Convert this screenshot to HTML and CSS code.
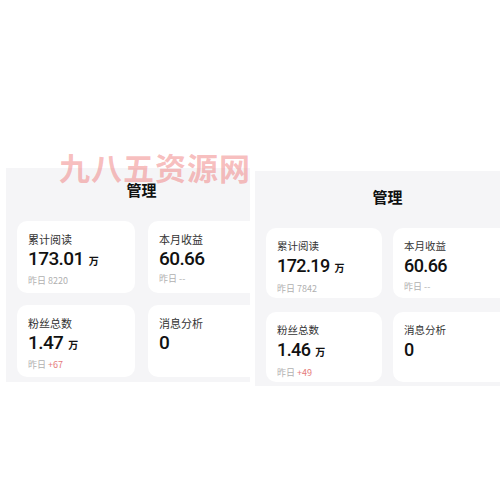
FILE: index.html
```html
<!DOCTYPE html>
<html lang="zh">
<head>
<meta charset="utf-8">
<link rel="stylesheet" href="styles.css">
</head>
<body>
<div class="canvas">
  <div class="shot shot-left">
    <div class="title">管理</div>
    <div class="grid">
      <div class="card">
        <div class="label">累计阅读</div>
        <div class="value">173.01<span class="unit">万</span></div>
        <div class="sub">昨日 8220</div>
      </div>
      <div class="card">
        <div class="label">本月收益</div>
        <div class="value">60.66</div>
        <div class="sub">昨日 --</div>
      </div>
      <div class="card">
        <div class="label">粉丝总数</div>
        <div class="value">1.47<span class="unit">万</span></div>
        <div class="sub">昨日 <span class="up">+67</span></div>
      </div>
      <div class="card">
        <div class="label">消息分析</div>
        <div class="value">0</div>
      </div>
    </div>
  </div>
  <div class="shot shot-right">
    <div class="title">管理</div>
    <div class="grid">
      <div class="card">
        <div class="label">累计阅读</div>
        <div class="value">172.19<span class="unit">万</span></div>
        <div class="sub">昨日 7842</div>
      </div>
      <div class="card">
        <div class="label">本月收益</div>
        <div class="value">60.66</div>
        <div class="sub">昨日 --</div>
      </div>
      <div class="card">
        <div class="label">粉丝总数</div>
        <div class="value">1.46<span class="unit">万</span></div>
        <div class="sub">昨日 <span class="up">+49</span></div>
      </div>
      <div class="card">
        <div class="label">消息分析</div>
        <div class="value">0</div>
      </div>
    </div>
  </div>
  <div class="watermark">九八五资源网</div>
</div>
</body>
</html>
```

FILE: styles.css
```css
html, body {
  margin: 0;
  padding: 0;
  background: #ffffff;
}
body {
  width: 500px;
  height: 500px;
  overflow: hidden;
  font-family: "Noto Sans CJK SC", "Noto Sans", sans-serif;
}
.canvas {
  position: relative;
  display: flex;
  align-items: flex-start;
  gap: 5px;
  padding: 168px 0 0 6px;
}
.shot {
  flex: none;
  overflow: hidden;
  background: #f5f5f7;
  box-sizing: border-box;
}
.shot-left {
  width: 244px;
  height: 214px;
  padding: 12px 0 0 11px;
}
.shot-right {
  width: 245px;
  height: 215px;
  margin-top: 3px;
  padding: 16px 0 0 11px;
}
.title {
  font-size: 15px;
  line-height: 20px;
  font-weight: 700;
  color: #111;
  text-align: center;
}
.shot-left .title { width: 249px; }
.shot-right .title { width: 243px; }
.grid {
  display: grid;
}
.shot-left .grid {
  margin-top: 21px;
  grid-template-columns: 118px 118px;
  grid-auto-rows: 72px;
  column-gap: 13px;
  row-gap: 12px;
}
.shot-right .grid {
  margin-top: 21px;
  grid-template-columns: 116px 116px;
  grid-auto-rows: 70px;
  column-gap: 11px;
  row-gap: 14px;
}
.card {
  background: #ffffff;
  border-radius: 10px;
  padding: 10px 11px 0 11px;
  box-sizing: border-box;
}
.label {
  font-size: 11px;
  line-height: 16px;
  color: #333;
}
.shot-right .label { font-size: 10.5px; }
.value {
  margin-top: 1px;
  font-family: Roboto, "Liberation Sans", sans-serif;
  font-weight: 500;
  font-size: 19px;
  line-height: 22px;
  letter-spacing: -0.6px;
  color: #111;
}
.shot-right .value { font-size: 18px; margin-top: 1px; }
.unit {
  font-family: "Noto Sans CJK SC", sans-serif;
  font-size: 10px;
  font-weight: 700;
  letter-spacing: 0;
  margin-left: 5px;
}
.sub {
  margin-top: 3px;
  font-size: 9px;
  line-height: 12px;
  color: #b0b0b0;
}
.shot-right .sub { margin-top: 4px; }
.up { color: #e57b7b; }
.watermark {
  position: absolute;
  left: 59px;
  top: 149px;
  font-size: 31px;
  line-height: 36px;
  font-weight: 700;
  letter-spacing: 1px;
  color: rgba(240, 120, 120, 0.48);
  white-space: nowrap;
}
```
